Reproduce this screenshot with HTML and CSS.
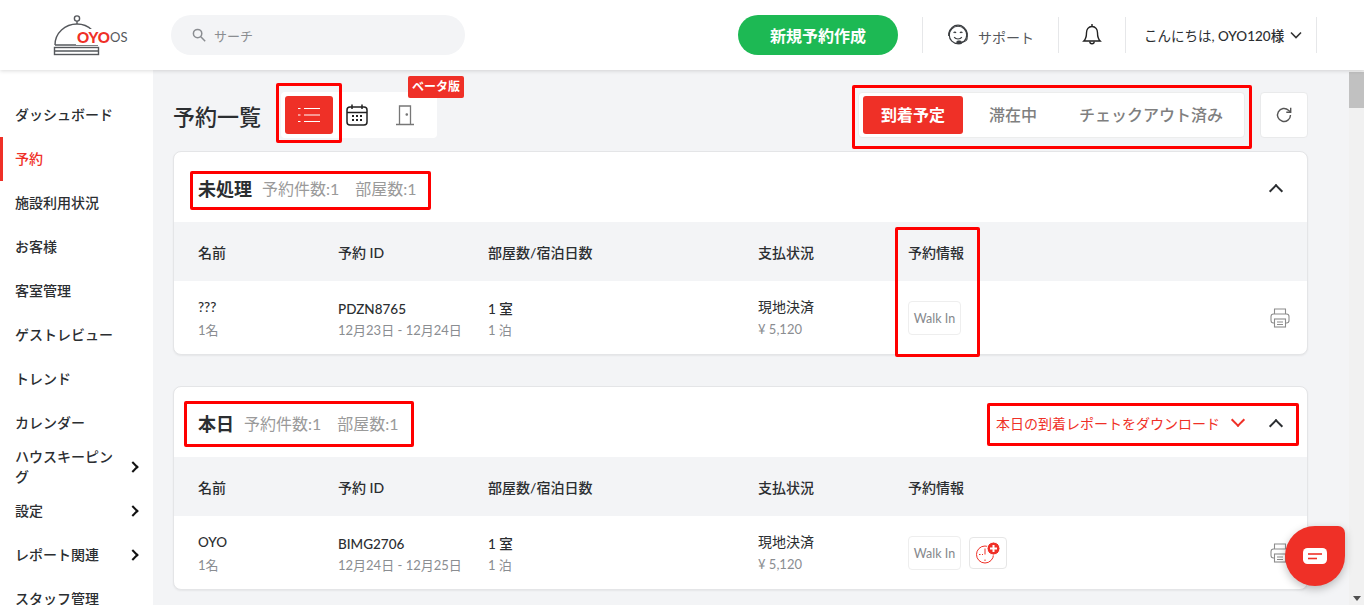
FILE: index.html
```html
<!DOCTYPE html>
<html lang="ja">
  <head>
    <meta charset="UTF-8" />
    <title>予約一覧</title>
    <link rel="stylesheet" href="styles.css">
  </head>
  <body>
    <header class="topbar">
      <div class="logo">
        <svg class="logo-bell" width="48" height="42" viewBox="0 0 48 42" fill="none" stroke="#55585c" stroke-width="1.4">
          <circle cx="24" cy="4.5" r="2.6" />
          <path d="M24 7v3" />
          <path d="M2 31C2 19 12 10 24 10c6 0 11 2 15 6" />
          <path d="M2 31h43" />
          <rect x="1.5" y="33.5" width="44" height="7" />
          <path d="M1.5 37h44" />
        </svg>
        <span class="logo-oyo">OYO</span>
        <span class="logo-os">OS</span>
      </div>
      <div class="search">
        <svg width="14" height="14" viewBox="0 0 14 14" fill="none" stroke="#8a8d91" stroke-width="1.5">
          <circle cx="5.6" cy="5.6" r="4.2" />
          <path d="M8.8 8.8l4.4 4.4" />
        </svg>
        <span>サーチ</span>
      </div>
      <div class="topbar-right">
        <button class="new-booking">新規予約作成</button>
        <div class="top-item support">
          <svg width="24" height="24" viewBox="0 0 22 22" fill="none" stroke="#3a3d40" stroke-width="1.1">
            <circle cx="11" cy="11" r="8" />
            <path d="M2.5 12V9.5C3.5 5 7 2 11 2s7.5 3 8.5 7.5V13" />
            <path d="M7 9c.6-.8 1.600-.8 2.200 0M12.800 9c.6-.8 1.600-.8 2.200 0" />
            <path d="M7.500 13c1.500 2.200 5.500 2.200 7 0" />
            <path d="M19.500 13c0 3-2.500 4.500-5 4.500" />
            <rect x="10" y="16.500" width="4" height="2.500" rx="1.200" fill="#3a3d40" />
          </svg>
          <span>サポート</span>
        </div>
        <div class="top-item bell">
          <svg width="20" height="24" viewBox="0 0 20 24" fill="none" stroke="#222" stroke-width="1.4">
            <path d="M10 3.500c-3.600 0-5.500 2.800-5.500 6.200 0 4.300-.8 6.400-2.700 8.300h16.400c-1.900-1.900-2.700-4-2.700-8.300 0-3.400-1.900-6.200-5.500-6.200z" />
            <path d="M10 1v2.500" />
            <path d="M7.800 18.500c0 3 4.400 3 4.400 0" />
          </svg>
        </div>
        <div class="top-item user">
          <span>こんにちは, <b>OYO120様</b></span>
          <svg width="12" height="8" viewBox="0 0 12 8" fill="none" stroke="#333" stroke-width="1.600">
            <path d="M1 1.500l5 5 5-5" />
          </svg>
        </div>
      </div>
    </header>

    <div class="layout">
      <nav class="sidebar">
        <a class="nav-item">ダッシュボード</a>
        <a class="nav-item active">予約</a>
        <a class="nav-item">施設利用状況</a>
        <a class="nav-item">お客様</a>
        <a class="nav-item">客室管理</a>
        <a class="nav-item">ゲストレビュー</a>
        <a class="nav-item">トレンド</a>
        <a class="nav-item">カレンダー</a>
        <a class="nav-item has-sub"><span>ハウスキーピング</span><i class="nav-arrow"></i></a>
        <a class="nav-item has-sub"><span>設定</span><i class="nav-arrow"></i></a>
        <a class="nav-item has-sub"><span>レポート関連</span><i class="nav-arrow"></i></a>
        <a class="nav-item">スタッフ管理</a>
      </nav>

      <main class="content">
        <div class="toolbar">
          <h1>予約一覧</h1>
          <div class="view-tabs">
            <span class="view-tab selected">
              <svg width="24" height="18" viewBox="0 0 24 18" fill="none" stroke="#fff" stroke-width="1">
                <path d="M7 2.500h16M7 9h16M7 15.500h16" />
                <path d="M1 2.500h2.500M1 9h2.500M1 15.500h2.500" />
              </svg>
            </span>
            <span class="view-tab">
              <svg width="24" height="24" viewBox="0 0 24 24" fill="none" stroke="#222" stroke-width="1.500">
                <rect x="2" y="4" width="20" height="18" rx="3" />
                <path d="M2 9.500h20M7 1.500v4.500M17 1.500v4.500" />
                <path d="M7 13h2M11 13h2M15 13h2M7 17h2M11 17h2M15 17h2" stroke-width="2" />
              </svg>
            </span>
            <span class="view-tab">
              <svg width="20" height="22" viewBox="0 0 20 22" fill="none" stroke="#777" stroke-width="1.300">
                <path d="M1 20.500h18M4.500 20.500V2h11v18.500" />
                <circle cx="11.800" cy="10.500" r=".7" fill="#777" />
              </svg>
            </span>
            <span class="beta">ベータ版</span>
          </div>
          <div class="status-tabs">
            <span class="status-tab selected">到着予定</span>
            <span class="status-tab">滞在中</span>
            <span class="status-tab">チェックアウト済み</span>
          </div>
          <button class="refresh">
            <svg width="18" height="18" viewBox="0 0 18 18" fill="none" stroke="#555" stroke-width="1.400">
              <path d="M15.500 9a6.500 6.500 0 1 1-2-4.700L15.500 6" />
              <path d="M15.700 1.800V6.200H11.300" />
            </svg>
          </button>
        </div>

        <section class="card">
          <div class="card-head">
            <h2>未処理</h2>
            <span class="count">予約件数:1</span>
            <span class="count">部屋数:1</span>
            <i class="collapse"></i>
          </div>
          <div class="row row-head">
            <span>名前</span><span>予約 ID</span><span>部屋数/宿泊日数</span><span>支払状況</span><span>予約情報</span>
          </div>
          <div class="row row-body">
            <div><p>???</p><small>1名</small></div>
            <div><p class="low">PDZN8765</p><small>12月23日 - 12月24日</small></div>
            <div><p class="low">1 室</p><small>1 泊</small></div>
            <div><p class="pay">現地決済</p><small class="amount">¥ 5,120</small></div>
            <div class="badges"><span class="walk-in">Walk In</span></div>
            <svg class="printer" width="20" height="20" viewBox="0 0 20 20" fill="none" stroke="#8c8c8c" stroke-width="1.100">
              <path d="M4.500 6V1h11v5" />
              <rect x="1" y="6" width="18" height="9" rx="2.500" />
              <rect x="4.500" y="11" width="11" height="8" fill="#fff" />
              <path d="M7 14h6M7 16.500h6" />
            </svg>
          </div>
        </section>

        <section class="card">
          <div class="card-head">
            <h2>本日</h2>
            <span class="count">予約件数:1</span>
            <span class="count">部屋数:1</span>
            <a class="download">本日の到着レポートをダウンロード<i class="down-arrow"></i></a>
            <i class="collapse"></i>
          </div>
          <div class="row row-head">
            <span>名前</span><span>予約 ID</span><span>部屋数/宿泊日数</span><span>支払状況</span><span>予約情報</span>
          </div>
          <div class="row row-body">
            <div><p>OYO</p><small>1名</small></div>
            <div><p class="low">BIMG2706</p><small>12月24日 - 12月25日</small></div>
            <div><p class="low">1 室</p><small>1 泊</small></div>
            <div><p class="pay">現地決済</p><small class="amount">¥ 5,120</small></div>
            <div class="badges">
              <span class="walk-in">Walk In</span>
              <span class="late-icon">
                <svg width="26" height="24" viewBox="0 0 26 24" fill="none" stroke="#ef3027" stroke-width="1">
                  <circle cx="10" cy="13.500" r="8.500" />
                  <path d="M10 7.500v6M4 13.500h1.500M7 13.500h1M10 18.500v1.500" />
                  <circle cx="18.500" cy="7.500" r="6.500" fill="#ef3027" stroke="#fff" />
                  <path d="M15 7.500h7M18.500 4v7" stroke="#fff" stroke-width="2" />
                </svg>
              </span>
            </div>
            <svg class="printer" width="20" height="20" viewBox="0 0 20 20" fill="none" stroke="#8c8c8c" stroke-width="1.100">
              <path d="M4.500 6V1h11v5" />
              <rect x="1" y="6" width="18" height="9" rx="2.500" />
              <rect x="4.500" y="11" width="11" height="8" fill="#fff" />
              <path d="M7 14h6M7 16.500h6" />
            </svg>
          </div>
        </section>
      </main>

      <div class="scrollbar">
        <span class="scroll-up"></span>
        <span class="scroll-thumb"></span>
        <span class="scroll-down"></span>
      </div>
    </div>

    <!-- red annotation boxes drawn over the screenshot -->
    <span class="mark mark-view"></span>
    <span class="mark mark-status"></span>
    <span class="mark mark-pending"></span>
    <span class="mark mark-info"></span>
    <span class="mark mark-today"></span>
    <span class="mark mark-download"></span>

    <button class="chat">
      <svg width="26" height="18" viewBox="0 0 26 18">
        <rect x="1" y="1" width="24" height="16" rx="4.500" fill="#fff" />
        <path d="M6 7h14" stroke="#ef3027" stroke-width="1.600" />
        <path d="M6 11.500h9" stroke="#ef3027" stroke-width="1.600" />
      </svg>
    </button>
  </body>
</html>
```

FILE: styles.css
```css
* {
  box-sizing: border-box;
}
html,
body {
  height: 605px;
}
body {
  margin: 0;
  overflow: hidden;
  font-family: Lato, "Noto Sans CJK JP", sans-serif;
  color: #2b2e31;
  background-color: #f3f4f6;
  display: flex;
  flex-direction: column;
}
h1,
h2,
p {
  margin: 0;
}

/* top bar */
.topbar {
  height: 70px;
  flex: none;
  display: flex;
  align-items: center;
  background-color: #fff;
  box-shadow: 0 1px 4px rgba(0, 0, 0, 0.14);
  position: relative;
  z-index: 2;
}
.logo {
  width: 171px;
  height: 42px;
  flex: none;
  display: flex;
  align-items: center;
  padding-left: 53px;
  position: relative;
}
.logo-bell {
  flex: none;
}
.logo-oyo {
  position: absolute;
  left: 76px;
  top: 15px;
  background-color: #fff;
  color: #ef3027;
  font-size: 15px;
  font-weight: 900;
  line-height: 16px;
  padding-left: 1px;
}
.logo-os {
  position: absolute;
  left: 110px;
  top: 14px;
  color: #55585c;
  font-size: 13px;
  line-height: 18px;
}
.search {
  width: 294px;
  height: 40px;
  display: flex;
  align-items: center;
  gap: 8px;
  padding-left: 21px;
  border-radius: 20px;
  background-color: #f3f4f6;
  color: #8a8d91;
  font-size: 13px;
}
.topbar-right {
  margin-left: auto;
  margin-right: 47px;
  display: flex;
  align-items: center;
}
.new-booking {
  width: 160px;
  height: 40px;
  margin-right: 24px;
  border: none;
  border-radius: 20px;
  background-color: #1db954;
  color: #fff;
  font-family: inherit;
  font-size: 16px;
  font-weight: 700;
}
.top-item {
  height: 36px;
  display: flex;
  align-items: center;
  border-left: 1px solid #e6e7e9;
}
.support {
  width: 136px;
  gap: 8px;
  padding-left: 23px;
  font-size: 14px;
  color: #55585c;
}
.support span {
  padding-top: 3px;
}
.bell {
  width: 67px;
  justify-content: center;
}
.user {
  width: 192px;
  gap: 6px;
  padding-left: 18px;
  border-right: 1px solid #e6e7e9;
  font-size: 13.500px;
}
.user b {
  font-weight: 500;
}

.layout {
  flex: 1;
  min-height: 0;
  display: flex;
}

/* sidebar */
.sidebar {
  width: 153px;
  flex: none;
  padding-top: 23px;
  background-color: #fff;
  overflow: hidden;
}
.nav-item {
  height: 44px;
  display: flex;
  align-items: center;
  padding: 0 14px 0 15px;
  font-size: 14px;
  line-height: 20px;
  font-weight: 500;
  flex: none;
}
.nav-item.active {
  color: #ef3027;
  border-left: 3px solid #ef3027;
  padding-left: 12px;
}
.has-sub {
  justify-content: space-between;
}
.has-sub span {
  width: 100px;
}
.nav-arrow {
  width: 8px;
  height: 8px;
  margin-right: 2px;
  border-top: 2px solid #111;
  border-right: 2px solid #111;
  transform: rotate(45deg);
}

/* main area */
.content {
  flex: 1;
  min-width: 0;
  padding: 22px 41px 0 20px;
  overflow: hidden;
}
.toolbar {
  height: 46px;
  display: flex;
  align-items: center;
  margin-bottom: 13px;
}
.toolbar h1 {
  width: 108px;
  font-size: 22px;
  font-weight: 500;
}
.view-tabs {
  width: 156px;
  height: 46px;
  display: flex;
  align-items: center;
  gap: 0;
  padding: 4px;
  background-color: #fff;
  border-radius: 4px;
  position: relative;
}
.view-tab {
  width: 48px;
  height: 38px;
  display: flex;
  align-items: center;
  justify-content: center;
  border-radius: 3px;
}
.view-tab.selected {
  background-color: #ef3027;
}
.beta {
  position: absolute;
  top: -16px;
  right: -27px;
  width: 56px;
  height: 22px;
  border-radius: 2px;
  background-color: #ef3027;
  color: #fff;
  font-size: 12px;
  font-weight: 700;
  line-height: 22px;
  text-align: center;
  white-space: nowrap;
}
.status-tabs {
  margin-left: auto;
  width: 387px;
  height: 46px;
  display: flex;
  align-items: center;
  padding: 4px;
  background-color: #fff;
  border: 1px solid #eceded;
  border-radius: 4px;
  font-size: 16px;
  font-weight: 500;
  color: #7f7f7f;
}
.status-tab {
  height: 38px;
  line-height: 38px;
  text-align: center;
  white-space: nowrap;
}
.status-tab:nth-child(1) {
  width: 100px;
}
.status-tab:nth-child(2) {
  width: 100px;
}
.status-tab:nth-child(3) {
  width: 176px;
}
.status-tab.selected {
  background-color: #ef3027;
  border-radius: 3px;
  color: #fff;
  font-weight: 700;
}
.refresh {
  width: 48px;
  height: 46px;
  margin-left: 15px;
  padding: 0;
  display: flex;
  align-items: center;
  justify-content: center;
  background-color: #fff;
  border: 1px solid #e9eaeb;
  border-radius: 4px;
}

/* booking cards */
.card {
  height: 204px;
  margin-bottom: 31px;
  background-color: #fff;
  border: 1px solid #e4e5e7;
  border-radius: 8px;
  box-shadow: 0 1px 2px rgba(0, 0, 0, 0.06);
  overflow: hidden;
}
.card-head {
  height: 70px;
  display: flex;
  align-items: center;
  padding: 1px 24px 0;
}
.card-head h2 {
  font-size: 18px;
  font-weight: 700;
  margin-right: 10px;
}
.count {
  margin-right: 16px;
  font-size: 16px;
  color: #9a9a9a;
}
.collapse {
  width: 10px;
  height: 10px;
  margin: 6px 2px 0 auto;
  border-top: 2px solid #2b2e31;
  border-left: 2px solid #2b2e31;
  transform: rotate(45deg);
}
.download {
  margin-left: auto;
  display: flex;
  align-items: center;
  font-size: 14px;
  color: #ef3027;
}
.down-arrow {
  width: 10px;
  height: 10px;
  margin: -5px 6px 0 13px;
  border-right: 2.500px solid #ef3027;
  border-bottom: 2.500px solid #ef3027;
  transform: rotate(45deg);
}
.download + .collapse {
  margin-left: 22px;
}
.row {
  display: grid;
  grid-template-columns: 140px 150px 270px 150px 1fr;
  padding: 0 24px;
  position: relative;
}
.row-head {
  height: 59px;
  align-items: center;
  background-color: #f3f4f6;
  font-size: 14px;
  font-weight: 500;
}
.row-body {
  height: 74px;
  align-items: center;
}
.row-body p {
  font-size: 13.500px;
  line-height: 20px;
  font-weight: 500;
  margin-bottom: 3px;
}
.row-body p.low {
  margin-top: 2px;
  margin-bottom: 1px;
}
.row-body p.pay {
  font-size: 14px;
  font-weight: 400;
  margin-bottom: 2px;
}
.row-body small {
  display: block;
  font-size: 13px;
  line-height: 20px;
  color: #8a8d91;
}
.row-body small.amount {
  margin-bottom: 1px;
}
.badges {
  display: flex;
  align-items: center;
  gap: 8px;
}
.walk-in {
  width: 53px;
  height: 34px;
  display: flex;
  align-items: center;
  justify-content: center;
  border: 1px solid #eeeeee;
  border-radius: 4px;
  font-size: 12.500px;
  color: #85888c;
}
.late-icon {
  width: 38px;
  height: 32px;
  display: flex;
  align-items: center;
  justify-content: center;
  border: 1px solid #e6e6e6;
  border-radius: 4px;
}
.printer {
  position: absolute;
  right: 17px;
  top: 27px;
}

/* fake browser scrollbar */
.scrollbar {
  width: 15px;
  flex: none;
  display: flex;
  flex-direction: column;
  background-color: #f1f1f1;
}
.scroll-up {
  height: 2px;
}
.scroll-thumb {
  height: 36px;
  background-color: #c1c1c1;
}
.scroll-down {
  margin-top: auto;
  margin-bottom: 4px;
  align-self: center;
  border-top: 5px solid #505050;
  border-left: 4px solid transparent;
  border-right: 4px solid transparent;
}

/* annotation overlays */
.mark {
  position: absolute;
  border: 3px solid #ff0000;
  border-radius: 2px;
  z-index: 3;
}
.mark-view {
  left: 276px;
  top: 83px;
  width: 66px;
  height: 60px;
}
.mark-status {
  left: 852px;
  top: 85px;
  width: 400px;
  height: 64px;
}
.mark-pending {
  left: 190px;
  top: 171px;
  width: 241px;
  height: 39px;
}
.mark-info {
  left: 895px;
  top: 227px;
  width: 85px;
  height: 130px;
}
.mark-today {
  left: 184px;
  top: 401px;
  width: 230px;
  height: 46px;
}
.mark-download {
  left: 987px;
  top: 403px;
  width: 312px;
  height: 43px;
}

.chat {
  position: absolute;
  left: 1285px;
  top: 526px;
  width: 60px;
  height: 60px;
  padding: 0;
  display: flex;
  align-items: center;
  justify-content: center;
  border: none;
  border-radius: 50% 7px 50% 50%;
  background-color: #ef3027;
  box-shadow: 0 3px 8px rgba(0, 0, 0, 0.25);
  z-index: 4;
}
```
